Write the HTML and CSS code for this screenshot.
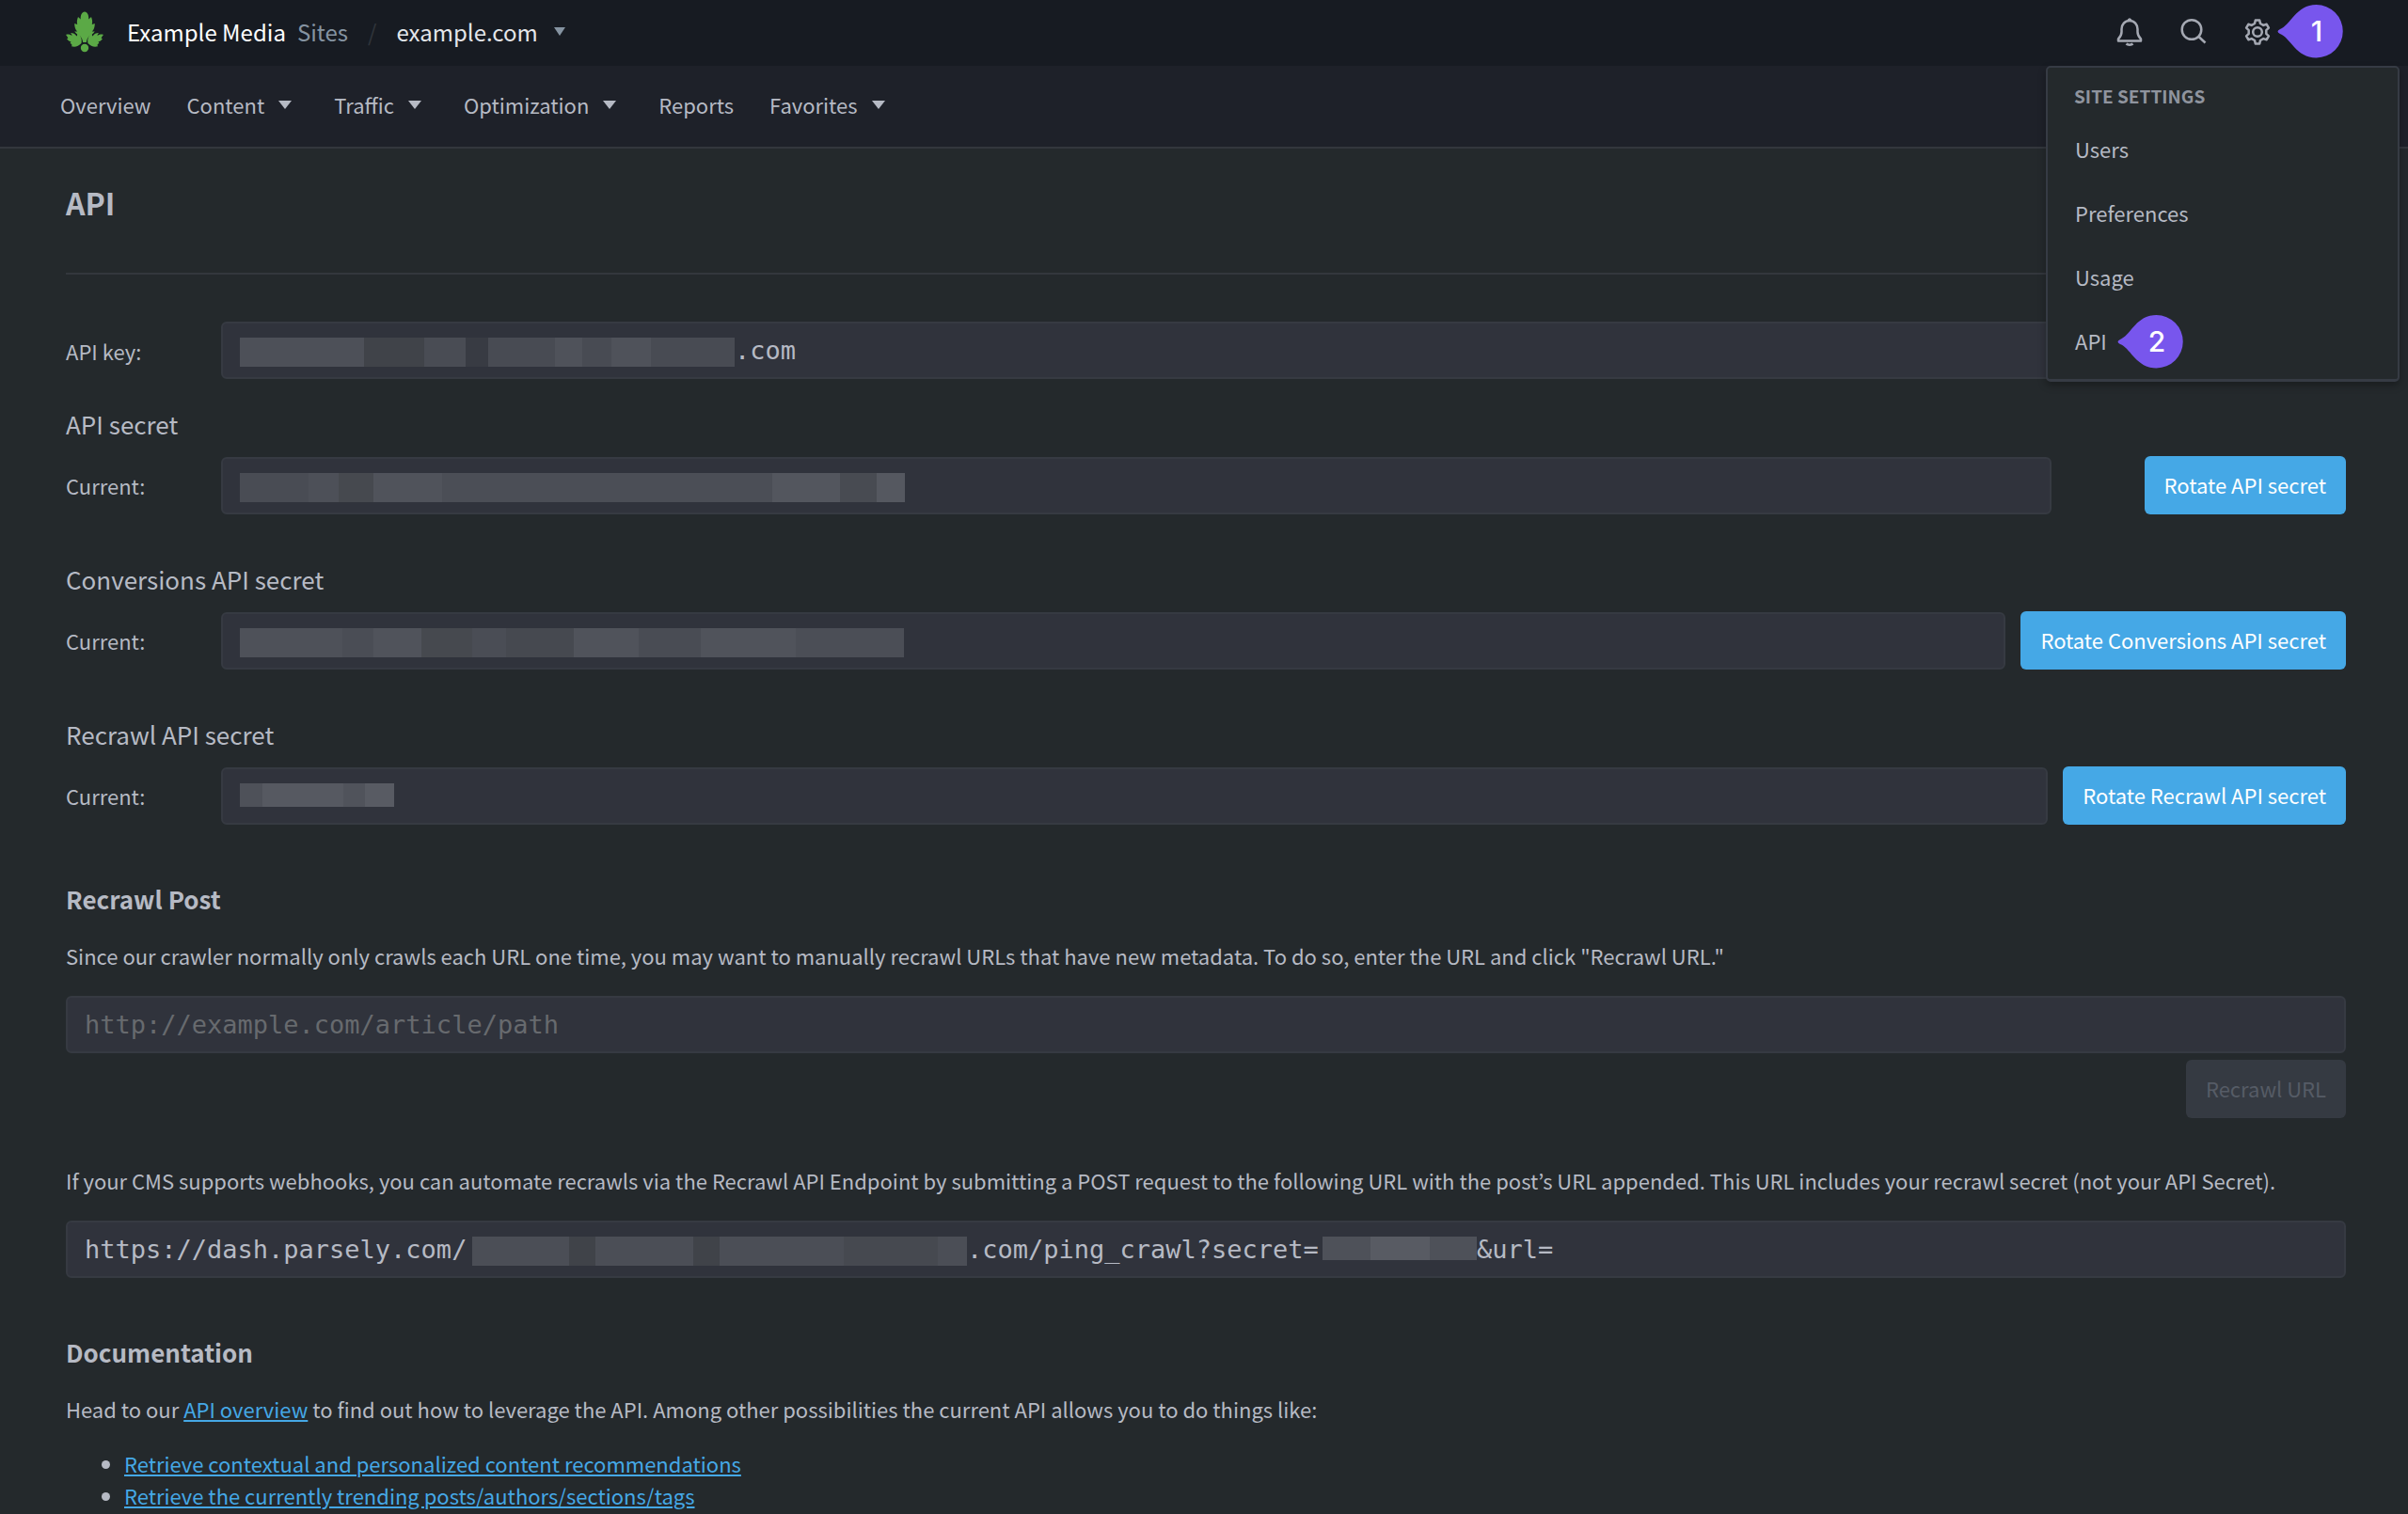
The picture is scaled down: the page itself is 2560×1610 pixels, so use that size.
FILE: index.html
```html
<!DOCTYPE html>
<html lang="en">
<head>
	<title>API</title>
	<meta charset="UTF-8">
	<meta name="viewport" content="width=device-width, initial-scale=1.0">
	<link rel="stylesheet" href="styles.css">
</head>
<body>
	<header class="topbar">
		<a class="logo" href="#" aria-label="Home">
			<svg width="42" height="44" viewBox="0 0 42 44" fill="#5ba946">
				<path d="M21 .5c3 .5 4.500 3.500 4.300 8L28 6c1 2.500 1.500 5 .8 8l3-1c0 4-1 6.500-3 8.500h3c-2 2.500-4 3.500-6 5-2 2-2.500 4-3 6.500h-3.600c-.5-2.500-1-4.500-3-6.500-2-1.500-4-2.500-6-5h3c-2-2-3-4.500-3-8.500l3 1c-.7-3-.2-5.500.8-8l2.700 2.500C16.500 4 18 1 21 .5z"/>
				<path d="M17.500 34c1-5-1-8.500-4.500-11 .3 1.500.3 2.500-.5 3.500-1.500-2.500-3.500-3.500-6.500-3.500 1 1 1.500 2 1.500 3-2.500-1.500-4.500-1.700-6.500-1 1.300 1.200 2 2.500 2.300 4H2c1 2 2.500 3 4.500 3.300L5.500 34c1 .3 1.700 1 2 2L7 37.300c4 1 7.500 0 10.500-3.300z"/>
				<path transform="matrix(-1 0 0 1 42 0)" d="M17.500 34c1-5-1-8.500-4.500-11 .3 1.500.3 2.500-.5 3.500-1.500-2.500-3.500-3.500-6.500-3.500 1 1 1.500 2 1.500 3-2.500-1.500-4.500-1.700-6.500-1 1.300 1.200 2 2.500 2.300 4H2c1 2 2.500 3 4.500 3.300L5.500 34c1 .3 1.700 1 2 2L7 37.300c4 1 7.500 0 10.500-3.300z"/>
				<circle cx="21" cy="39" r="4.200"/>
			</svg>
		</a>
		<a class="network" href="#">Example Media</a>
		<a class="sites" href="#">Sites</a>
		<span class="slash">/</span>
		<button class="site-picker" type="button">example.com <svg class="caret" width="12" height="9" viewBox="0 0 12 9"><path d="M0 0h12L6 9z"/></svg></button>
		<div class="actions">
			<button type="button" aria-label="Notifications">
				<svg width="28" height="30" viewBox="0 0 28 30"><path d="M2 24.500v-2c2-2 3.500-4 3.500-7.500V12C5.500 7 9 3 14 3s8.500 4 8.500 9v3c0 3.500 1.500 5.500 3.500 7.500v2z"/><path d="M12.500 2.500 14 1.500l1.500 1M10.500 27.500c1.500 1.500 5.500 1.500 7 0"/></svg>
			</button>
			<button type="button" aria-label="Search">
				<svg width="28" height="30" viewBox="0 0 28 30"><circle cx="12" cy="12.500" r="10.300"/><path d="m19.500 20 7 6.500"/></svg>
			</button>
			<button type="button" aria-label="Site settings">
				<svg width="28" height="30" viewBox="0 0 28 30"><circle cx="14" cy="15" r="4.800"/><path d="M11 6l.8-3.500h4.400L17 6l3.300 1.900 3.400-1.100 2.200 3.900-2.600 2.400v3.800l2.600 2.400-2.200 3.900-3.400-1.100L17 24l-.8 3.500h-4.400L11 24l-3.300-1.900-3.400 1.100-2.200-3.900 2.600-2.400v-3.800l-2.600-2.400 2.200-3.900 3.400 1.100z"/></svg>
			</button>
		</div>
		<div class="marker marker-settings">
			<svg width="70" height="57" viewBox="0 0 70 57"><path d="M3 26C14 22 20 0 41.500 0a28.200 28.200 0 0 1 0 56.500C20 56.500 14 35 3 31q-5-2.500 0-5z"/></svg>
			<span>1</span>
		</div>
	</header>

	<nav class="mainnav">
		<a href="#">Overview</a>
		<button type="button">Content <svg class="caret" width="14" height="9" viewBox="0 0 14 9"><path d="M0 0h14L7 9z"/></svg></button>
		<button type="button">Traffic <svg class="caret" width="14" height="9" viewBox="0 0 14 9"><path d="M0 0h14L7 9z"/></svg></button>
		<button type="button">Optimization <svg class="caret" width="14" height="9" viewBox="0 0 14 9"><path d="M0 0h14L7 9z"/></svg></button>
		<a href="#">Reports</a>
		<button type="button">Favorites <svg class="caret" width="14" height="9" viewBox="0 0 14 9"><path d="M0 0h14L7 9z"/></svg></button>
	</nav>

	<!-- Settings dropdown -->
	<div class="settings-menu">
		<h2>SITE SETTINGS</h2>
		<a href="#">Users</a>
		<a href="#">Preferences</a>
		<a href="#">Usage</a>
		<a href="#">API</a>
		<div class="marker marker-api">
			<svg width="70" height="57" viewBox="0 0 70 57"><path d="M3 26C14 22 20 0 41.500 0a28.200 28.200 0 0 1 0 56.500C20 56.500 14 35 3 31q-5-2.500 0-5z"/></svg>
			<span>2</span>
		</div>
	</div>

	<main>
		<h1>API</h1>

		<div class="row">
			<label for="api-key">API key:</label>
			<div class="field">
				<span class="mask mask-key"></span>
				<input type="text" id="api-key" value=".com" readonly>
			</div>
		</div>

		<h3>API secret</h3>
		<div class="row">
			<label for="api-secret">Current:</label>
			<div class="field field-short">
				<span class="mask mask-secret"></span>
				<input type="text" id="api-secret" readonly>
			</div>
			<button class="btn" type="button">Rotate API secret</button>
		</div>

		<h3>Conversions API secret</h3>
		<div class="row">
			<label for="conversions-secret">Current:</label>
			<div class="field">
				<span class="mask mask-conversions"></span>
				<input type="text" id="conversions-secret" readonly>
			</div>
			<button class="btn" type="button">Rotate Conversions API secret</button>
		</div>

		<h3>Recrawl API secret</h3>
		<div class="row">
			<label for="recrawl-secret">Current:</label>
			<div class="field">
				<span class="mask mask-recrawl"></span>
				<input type="text" id="recrawl-secret" readonly>
			</div>
			<button class="btn" type="button">Rotate Recrawl API secret</button>
		</div>

		<h2>Recrawl Post</h2>
		<form class="recrawl">
			<label for="recrawl-url">Since our crawler normally only crawls each URL one time, you may want to manually recrawl URLs that have new metadata. To do so, enter the URL and click "Recrawl URL."</label>
			<div class="field">
				<input type="text" id="recrawl-url" placeholder="http://example.com/article/path">
			</div>
			<button class="btn" type="submit" disabled>Recrawl URL</button>
		</form>

		<div class="webhook">
			<label for="webhook-url">If your CMS supports webhooks, you can automate recrawls via the Recrawl API Endpoint by submitting a POST request to the following URL with the post’s URL appended. This URL includes your recrawl secret (not your API Secret).</label>
			<div class="field">
				<input class="part-host" type="text" id="webhook-url" value="https://dash.parsely.com/" readonly>
				<span class="mask mask-site"></span>
				<input class="part-path" type="text" aria-label="Webhook path" value=".com/ping_crawl?secret=" readonly>
				<span class="mask mask-ping"></span>
				<input type="text" aria-label="Webhook url parameter" value="&amp;url=" readonly>
			</div>
		</div>

		<h2>Documentation</h2>
		<p>Head to our <a href="#">API overview</a> to find out how to leverage the API. Among other possibilities the current API allows you to do things like:</p>
		<ul>
			<li><a href="#">Retrieve contextual and personalized content recommendations</a></li>
			<li><a href="#">Retrieve the currently trending posts/authors/sections/tags</a></li>
		</ul>
	</main>
</body>
</html>
```
FILE: styles.css
```css
* {
	box-sizing: border-box;
}
body {
	margin: 0;
	background-color: #24292c;
	color: #b6bac4;
	font-family: "Noto Sans CJK KR", "Noto Sans", sans-serif;
	font-size: 22px;
	line-height: 34px;
	position: relative;
}
button {
	font: inherit;
	color: inherit;
	background: none;
	border: none;
	padding: 0;
	cursor: pointer;
}
.caret {
	fill: currentColor;
}

/* Top bar */
.topbar {
	display: flex;
	align-items: center;
	height: 70px;
	padding: 0 98px 2px 69px;
	background-color: #171b22;
	font-size: 24px;
	position: relative;
}
.topbar a {
	text-decoration: none;
}
.logo {
	display: flex;
	margin-right: 24px;
}
.network {
	color: #fff;
	margin-right: 12px;
}
.sites {
	color: #8593a1;
}
.slash {
	color: #30353b;
	margin: 0 21px;
}
.site-picker {
	display: flex;
	align-items: center;
	gap: 17px;
	color: #e4e6ea;
}
.site-picker .caret {
	color: #8593a1;
	margin-bottom: 2px;
}
.actions {
	display: flex;
	gap: 40px;
	margin-left: auto;
	margin-right: 48px;
}
.actions button {
	display: flex;
}
.actions svg {
	fill: none;
	stroke: #a5a9b3;
	stroke-width: 2.5;
	stroke-linejoin: round;
}

/* Main navigation */
.mainnav {
	display: flex;
	align-items: center;
	gap: 38px;
	height: 88px;
	padding: 0 64px 4px;
	background-color: #1e2129;
	border-bottom: 2px solid #33373d;
}
.mainnav a {
	color: inherit;
	text-decoration: none;
}
.mainnav button {
	display: flex;
	align-items: center;
	gap: 15px;
	margin-right: 7px;
}

/* Settings dropdown */
.settings-menu {
	position: absolute;
	top: 70px;
	right: 9px;
	width: 376px;
	padding: 14px 29px 7px;
	background-color: #24292c;
	border: 2px solid #363b44;
	border-bottom-width: 3px;
	border-radius: 5px;
	box-shadow: 0 4px 8px rgba(0, 0, 0, 0.3);
}
.settings-menu h2 {
	margin: 0 0 6px -1px;
	color: #8f949e;
	font-size: 19px;
	line-height: 32px;
}
.settings-menu a {
	display: block;
	padding: 17px 0;
	color: inherit;
	text-decoration: none;
}

/* Numbered markers */
.marker {
	position: absolute;
	width: 70px;
	height: 57px;
	color: #fff;
	font-family: Inter, sans-serif;
	font-size: 30px;
	font-weight: 500;
}
.marker svg {
	display: block;
	fill: #7856ed;
}
.marker span {
	position: absolute;
	inset: 0 0 0 14px;
	line-height: 57px;
	text-align: center;
}
.marker-settings {
	top: 5px;
	right: 69px;
}
.marker-api {
	bottom: 11px;
	left: 74px;
}

/* Page content */
main {
	padding: 37px 66px 0 70px;
}
h1 {
	margin: 0 0 50px;
	padding-bottom: 55px;
	border-bottom: 2px solid #33373d;
	font-size: 32px;
	line-height: 40px;
}
main h2 {
	margin: 58px 0 22px;
	font-size: 26px;
	line-height: 42px;
}
h3 {
	margin: 45px 0 10px;
	font-size: 26px;
	font-weight: 400;
	line-height: 48px;
}
h1 + .row + h3 {
	margin-top: 24px;
}
.row {
	display: flex;
	align-items: center;
	gap: 16px;
}
.row label {
	flex: 0 0 149px;
}
.field {
	display: flex;
	flex: 1;
	align-items: center;
	height: 61px;
	padding: 0 18px;
	background-color: #30333c;
	border: 2px solid #363a42;
	border-radius: 6px;
}
.field-short {
	margin-right: 83px;
}
.field input {
	flex: 1;
	min-width: 0;
	padding: 0;
	background: none;
	border: none;
	color: #b6bac4;
	font-family: "DejaVu Sans Mono", monospace;
	font-size: 27px;
	outline: none;
}
.field input::placeholder {
	color: #676a6e;
}
.field .part-host {
	flex: 0 0 412px;
}
.field .part-path {
	flex: 0 0 378px;
}
.btn {
	height: 62px;
	padding: 0 21px 2px;
	background-color: #45a8e6;
	border-radius: 6px;
	color: #fff;
}
.btn:disabled {
	background-color: #353a42;
	color: #565c66;
	cursor: default;
}
.recrawl label,
.webhook label {
	display: block;
	margin-bottom: 26px;
}
.recrawl .btn {
	display: block;
	margin: 7px 0 49px auto;
}
main p {
	margin: 0 0 24px;
}
main a {
	color: #45a8e6;
}
ul {
	margin: 0;
	padding-left: 62px;
}

/* Hidden parts of keys and secrets */
.mask {
	flex: none;
	align-self: flex-start;
	height: 31px;
	margin-top: 15px;
}
.mask-key {
	width: 526px;
	background: linear-gradient(to right, #4d5058 0 132px, #404349 132px 196px, #494c54 196px 240px, #383b43 240px 264px, #484b53 264px 335px, #4f525a 335px 364px, #484b53 364px 395px, #4f525a 395px 437px, #484b53 437px);
}
.mask-secret {
	width: 707px;
	background: linear-gradient(to right, #494c54 0 73px, #4d5058 73px 105px, #46494f 105px 142px, #50535b 142px 215px, #4b4e56 215px 566px, #53565e 566px 638px, #484b52 638px 677px, #555860 677px);
}
.mask-conversions {
	width: 706px;
	background: linear-gradient(to right, #4e5159 0 109px, #4a4d55 109px 142px, #50535b 142px 193px, #46494f 193px 247px, #4a4d55 247px 283px, #464950 283px 355px, #50535b 355px 424px, #494c54 424px 490px, #50535b 490px 591px, #4b4e56 591px);
}
.mask-recrawl {
	width: 164px;
	height: 25px;
	background: linear-gradient(to right, #4e5159 0 24px, #565961 24px 110px, #50535b 110px 133px, #585b63 133px);
}
.mask-site {
	width: 526px;
	background: linear-gradient(to right, #4b4e56 0 103px, #404349 103px 131px, #4b4e56 131px 235px, #404349 235px 263px, #4b4e56 263px 395px, #464950 395px 495px, #4b4e56 495px);
}
.mask-ping {
	width: 164px;
	height: 25px;
	background: linear-gradient(to right, #4e5159 0 51px, #585b63 51px 114px, #4e5159 114px);
}
```
